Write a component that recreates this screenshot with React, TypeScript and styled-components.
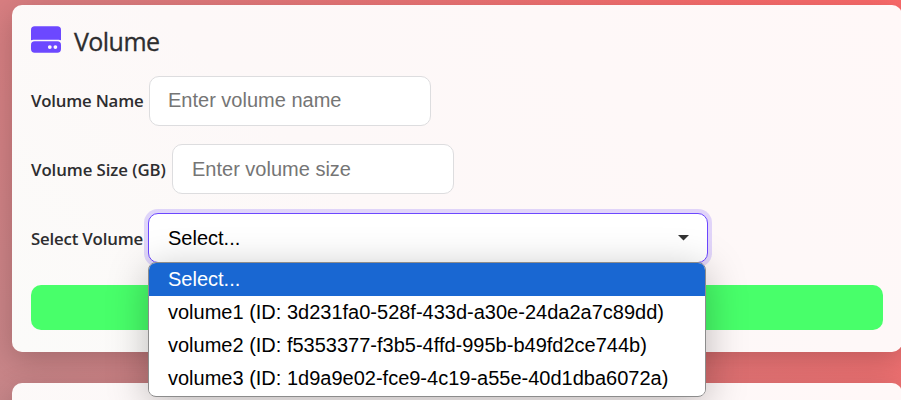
import React from "react";
import styled, { createGlobalStyle } from "styled-components";

const Global = createGlobalStyle`
  *, *::before, *::after { box-sizing: border-box; }
  html, body { margin: 0; height: 400px; overflow: hidden; }
`;

const Page = styled.div`
  width: 901px;
  height: 400px;
  overflow: hidden;
  padding: 5px 0 0 12px;
  display: flex;
  flex-direction: column;
  gap: 31px;
  background: linear-gradient(45deg, #c78689 0%, #d87e81 31%, #f66c6c 85%, #fb6a6a 100%);
  color: #2d2d2f;
  font-family: "Segoe UI", "Open Sans", "Noto Sans", sans-serif;
`;

const Card = styled.section`
  width: 890px;
  height: 347px;
  flex: none;
  padding: 18px 19px;
  border-radius: 10px;
  background: linear-gradient(45deg, #fbfbf9 0%, #fdf8f8 40%, #fff8f8 100%);
  box-shadow: 0 8px 30px rgba(0, 0, 0, 0.2);
`;

const Heading = styled.h2`
  display: flex;
  align-items: center;
  gap: 13px;
  height: 36px;
  margin: 0 0 17px;
  font-size: 25px;
  font-weight: 500;
  line-height: 36px;
  letter-spacing: -0.55px;
  -webkit-text-stroke: 0.3px currentColor;
`;

const Form = styled.form`
  display: flex;
  flex-direction: column;
`;

const Row = styled.div<{ $gap: number; $last?: boolean }>`
  display: flex;
  align-items: center;
  height: 50px;
  margin-bottom: ${(p) => (p.$last ? 22 : 18)}px;
  gap: ${(p) => p.$gap}px;
  &:nth-of-type(3) { margin-top: 1px; }
`;

const Label = styled.label<{ $width: number; $spacing: number; $drop?: boolean }>`
  width: ${(p) => p.$width}px;
  flex: none;
  padding-top: ${(p) => (p.$drop ? 2 : 0)}px;
  white-space: nowrap;
  font-size: 16.8px;
  line-height: 22px;
  font-weight: 600;
  letter-spacing: ${(p) => p.$spacing}px;
`;

const Input = styled.input<{ $drop?: boolean }>`
  width: 282px;
  height: 50px;
  padding: ${(p) => (p.$drop ? "0 19px" : "0 18px 2px")};
  border: 1px solid #dddddf;
  border-radius: 10px;
  background: #fff;
  outline: none;
  font: 20px "Liberation Sans", Arial, sans-serif;
  &::placeholder { color: #757575; opacity: 1; }
`;

const SelectWrap = styled.div`
  position: relative;
  width: 560px;
  height: 50px;
`;

const SelectBox = styled.div`
  display: flex;
  align-items: center;
  justify-content: space-between;
  height: 50px;
  padding: 0 18px 0 19px;
  border: 1px solid #6c48ff;
  border-radius: 10px;
  background: #fff;
  box-shadow: 0 0 0 4px rgba(108, 72, 255, 0.2);
  color: #000;
  font: 20px "Liberation Sans", Arial, sans-serif;
`;

const Menu = styled.ul`
  position: absolute;
  top: 49px;
  left: 0;
  width: 558px;
  height: 135px;
  margin: 0;
  padding: 0;
  list-style: none;
  overflow: hidden;
  border: 1px solid #8c8c8c;
  border-radius: 8px;
  background: #fff;
  box-shadow: 0 8px 40px rgba(0, 0, 0, 0.26);
`;

const Option = styled.li<{ $active?: boolean }>`
  height: 33px;
  padding-left: 19px;
  font: 20px/33px "Liberation Sans", Arial, sans-serif;
  color: ${(p) => (p.$active ? "#fff" : "#000")};
  background: ${(p) => (p.$active ? "#1967d2" : "#fff")};
`;

const Submit = styled.button`
  height: 45px;
  border: 0;
  border-radius: 10px;
  background: #48ff6a;
`;

const options = [
  "Select...",
  "volume1 (ID: 3d231fa0-528f-433d-a30e-24da2a7c89dd)",
  "volume2 (ID: f5353377-f3b5-4ffd-995b-b49fd2ce744b)",
  "volume3 (ID: 1d9a9e02-fce9-4c19-a55e-40d1dba6072a)",
];

const IconBox = styled.span`
  display: flex;
  align-self: flex-start;
  padding-top: 3px;
`;

const DriveIcon = () => (
  <IconBox>
    <svg width="30" height="27" viewBox="0 0 30 27" fill="#6c48ff">
      <path d="M3.700 0.300h22.600a3.700 3.700 0 0 1 3.700 3.700v10.300a5 5 0 0 0-2.500-.5H2.500a5 5 0 0 0-2.500.5V4a3.700 3.700 0 0 1 3.700-3.700z" />
      <path
        fillRule="evenodd"
        d="M3.700 15.200h22.600a3.700 3.700 0 0 1 3.700 3.700v4.200a3.700 3.700 0 0 1-3.700 3.700H3.700a3.700 3.700 0 0 1-3.700-3.700v-4.200a3.700 3.700 0 0 1 3.700-3.700zM18.800 19.200a1.900 1.900 0 1 0 0 3.800a1.900 1.900 0 0 0 0-3.800zM24.400 19.200a1.900 1.900 0 1 0 0 3.800a1.900 1.900 0 0 0 0-3.800z"
      />
    </svg>
  </IconBox>
);

export default function App() {
  return (
    <>
      <Global />
      <Page>
        <Card>
          <Heading>
            <DriveIcon />
            Volume
          </Heading>
          <Form>
            <Row $gap={6}>
              <Label $width={112} $spacing={-0.2}>Volume Name</Label>
              <Input placeholder="Enter volume name" />
            </Row>
            <Row $gap={6}>
              <Label $drop $width={135} $spacing={-0.07}>Volume Size (GB)</Label>
              <Input $drop placeholder="Enter volume size" />
            </Row>
            <Row $gap={5} $last>
              <Label $drop $width={112} $spacing={-0.18}>Select Volume</Label>
              <SelectWrap>
                <SelectBox>
                  Select...
                  <svg width="11" height="6" viewBox="0 0 11 6" fill="#333">
                    <path d="M0 0h11L5.500 5.500z" />
                  </svg>
                </SelectBox>
                <Menu>
                  {options.map((o, i) => (
                    <Option key={o} $active={i === 0}>{o}</Option>
                  ))}
                </Menu>
              </SelectWrap>
            </Row>
            <Submit type="button" />
          </Form>
        </Card>
        <Card />
      </Page>
    </>
  );
}
